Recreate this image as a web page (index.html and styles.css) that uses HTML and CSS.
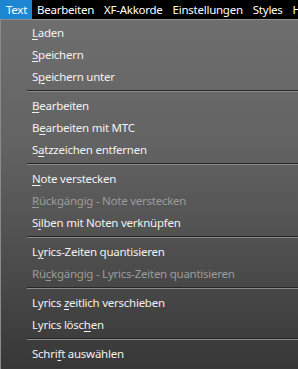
FILE: index.html
```html
<!DOCTYPE html>
<html lang="de">

<head>
    <meta charset="UTF-8">
    <meta name="viewport" content="width=device-width, initial-scale=1.0">
    <title>Text-Menü</title>
    <link rel="stylesheet" href="styles.css">
</head>

<body>
    <nav class="menubar">
        <span class="top active">Text</span>
        <span class="top">Bearbeiten</span>
        <span class="top">XF-Akkorde</span>
        <span class="top">Einstellungen</span>
        <span class="top">Styles</span>
        <span class="top last">H</span>
    </nav>

    <ul class="menu">
        <li class="item"><u>L</u>aden</li>
        <li class="item"><u>S</u>peichern</li>
        <li class="item">S<u>p</u>eichern unter</li>
        <li class="sep"></li>
        <li class="item"><u>B</u>earbeiten</li>
        <li class="item">B<u>e</u>arbeiten mit MTC</li>
        <li class="item">S<u>a</u>tzzeichen entfernen</li>
        <li class="sep"></li>
        <li class="item"><u>N</u>ote verstecken</li>
        <li class="item off"><u>R</u>ückgängig - Note verstecken</li>
        <li class="item">S<u>i</u>lben mit Noten verknüpfen</li>
        <li class="sep"></li>
        <li class="item">L<u>y</u>rics-Zeiten quantisieren</li>
        <li class="item off">Rü<u>c</u>kgängig - Lyrics-Zeiten quantisieren</li>
        <li class="sep"></li>
        <li class="item">Lyrics <u>z</u>eitlich verschieben</li>
        <li class="item">Lyrics lösc<u>h</u>en</li>
        <li class="sep"></li>
        <li class="item">Schri<u>f</u>t auswählen</li>
    </ul>
</body>

</html>
```

FILE: styles.css
```css
* {
    margin: 0;
    padding: 0;
    box-sizing: border-box;
}

body {
    width: 298px;
    height: 369px;
    overflow: hidden;
    background-color: #383838;
    font-family: 'Noto Sans', 'Open Sans', sans-serif;
    font-size: 11.5px;
    letter-spacing: -0.25px;
    color: #f2f2f2;
}

.menubar {
    display: flex;
    height: 20px;
    background-color: #000;
    border-bottom: 1px solid #8f8f8f;
    white-space: nowrap;
    overflow: hidden;
}

.top {
    padding: 0 5px;
    line-height: 19px;
    color: #fff;
}

.active {
    padding-left: 6px;
    background-color: #1c86d2;
}

.last {
    padding-right: 0;
}

.menu {
    list-style: none;
    height: 349px;
    padding-top: 2px;
    border-left: 1px solid #8a8a8a;
    background: linear-gradient(#6e6e6e 0%, #636363 35%, #4c4c4c 70%, #373737 100%);
    overflow: hidden;
}

.item {
    height: 22px;
    line-height: 22px;
    padding-left: 31px;
    white-space: nowrap;
}

.item u {
    text-underline-offset: 2px;
}

.off {
    color: #9c9c9c;
}

.sep {
    height: 7px;
    margin-left: 26px;
    padding-top: 2px;
}

.sep::before {
    content: "";
    display: block;
    height: 1px;
    background-color: #262626;
    border-bottom: 1px solid #8a8a8a;
    box-sizing: content-box;
}
```
